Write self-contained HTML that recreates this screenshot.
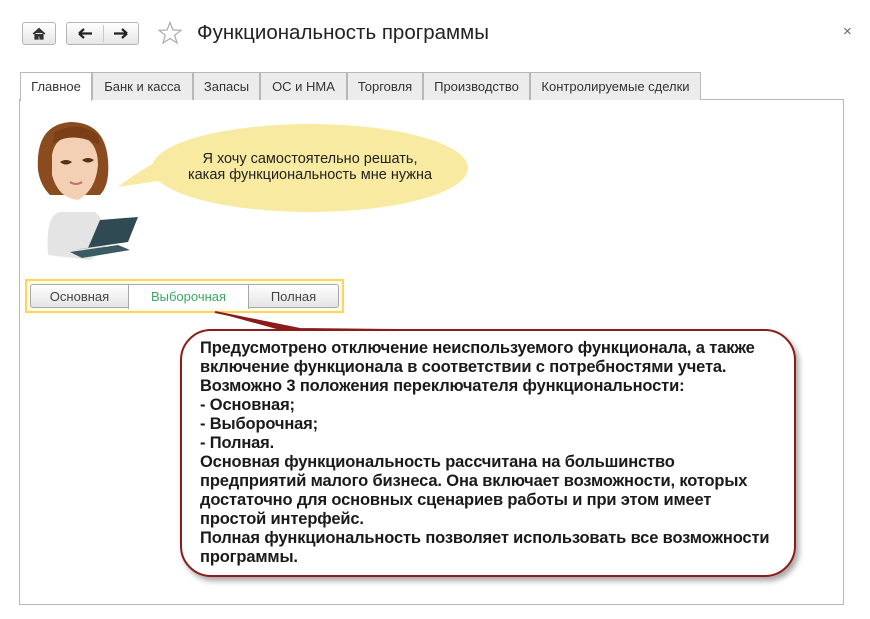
<!DOCTYPE html>
<html><head><meta charset="utf-8"><style>
body{margin:0;width:870px;height:619px;background:#fff;font-family:"Liberation Sans",Arial,sans-serif;position:relative;overflow:hidden}
.abs{position:absolute}
.btn{position:absolute;border:1px solid #b5b5b5;border-radius:3px;background:linear-gradient(#fff,#e6e6e6);box-sizing:border-box}
.tab{position:absolute;top:72px;height:28px;box-sizing:border-box;border:1px solid #b8b8b8;border-bottom:none;background:#ececec;font-size:13px;color:#333;text-align:center;line-height:27px}
.seg{position:absolute;top:0;height:24px;line-height:23px;font-size:13px;text-align:center;color:#444;box-sizing:border-box}
.txt{position:absolute;left:200px;top:339px;font-size:16.5px;font-weight:bold;line-height:19px;color:#1a1a1a;letter-spacing:-0.15px}
</style></head><body>
<div class="btn" style="left:22px;top:22px;width:34px;height:23px"><svg width="32" height="21"><path d="M10 11 L16 5.5 L22 11 M12 10 V16 H15 V13 H17 V16 H20 V10" fill="#333" stroke="#333" stroke-width="1.2"/></svg></div>
<div class="btn" style="left:66px;top:22px;width:73px;height:23px"><div class="abs" style="left:36px;top:2px;width:1px;height:17px;background:#c8c8c8"></div>
<svg class="abs" style="left:0;top:0" width="72" height="21"><path d="M12 10.5 H25 M12 10.5 L17 6 M12 10.5 L17 15" stroke="#222" stroke-width="2.2" fill="none"/><path d="M47 10.5 H60 M60 10.5 L55 6 M60 10.5 L55 15" stroke="#222" stroke-width="2.2" fill="none"/></svg></div>
<svg class="abs" style="left:158px;top:21px" width="24" height="24"><path d="M12 1.5 L15 9 L23 9.3 L16.7 14.2 L19 22 L12 17.5 L5 22 L7.3 14.2 L1 9.3 L9 9 Z" fill="none" stroke="#aaa" stroke-width="1.2"/></svg>
<div class="abs" style="left:197px;top:21px;font-size:20.5px;color:#222">Функциональность программы</div>
<div class="abs" style="left:843px;top:23px;font-size:15px;color:#666">×</div>

<div class="abs" style="left:19px;top:99px;width:823px;height:504px;border:1px solid #b8b8b8"></div>
<div class="tab" style="left:20px;width:72px;background:#fff;height:29px">Главное</div>
<div class="tab" style="left:92px;width:101px">Банк и касса</div>
<div class="tab" style="left:193px;width:67px">Запасы</div>
<div class="tab" style="left:260px;width:87px">ОС и НМА</div>
<div class="tab" style="left:347px;width:76px">Торговля</div>
<div class="tab" style="left:423px;width:107px">Производство</div>
<div class="tab" style="left:530px;width:171px">Контролируемые сделки</div>

<svg class="abs" style="left:0;top:100px" width="480" height="240">
<path d="M118 87 Q140 70 160 60 L200 75 Q150 82 118 87Z" fill="#f8eaa0"/>
<ellipse cx="310" cy="68" rx="158" ry="44" fill="#f8eaa0"/>
<path d="M48 155 Q45 115 60 112 L95 112 Q110 125 105 150 L90 160 Z" fill="#e4e4e4"/>
<path d="M38 70 Q35 25 70 22 Q105 22 108 60 Q110 85 100 95 L50 95 Q40 85 38 70Z" fill="#8a4b1f"/>
<path d="M52 55 Q55 35 78 35 Q98 40 98 65 Q96 90 78 100 Q58 98 52 75Z" fill="#f3d0b4"/>
<path d="M52 45 Q70 30 100 45 L98 35 Q80 20 55 32Z" fill="#7a3f17"/>
<path d="M60 62 Q66 58 72 62 Q66 67 60 62Z M82 60 Q88 56 94 60 Q88 65 82 60Z" fill="#5a2e10"/>
<path d="M70 82 Q76 86 82 82" stroke="#c07070" stroke-width="2" fill="none"/>
<path d="M73 150 L128 142 L138 117 L100 120 L88 148 Z" fill="#2f4a52"/>
<path d="M70 152 L118 145 L130 150 L82 158Z" fill="#3b5a62"/>
</svg>
<div class="abs" style="left:160px;top:151px;width:300px;text-align:center;font-size:14.5px;line-height:16px;color:#222">Я хочу самостоятельно решать,<br>какая функциональность мне нужна</div>

<div class="abs" style="left:25px;top:279px;width:319px;height:34px;border:2px solid #fbd65a;box-sizing:border-box;background:#fffbe8"></div>
<div class="abs" style="left:30px;top:284px;width:309px;height:24px;border:1px solid #a8a8a8;border-radius:3px;box-sizing:border-box;background:linear-gradient(#fff,#e4e4e4)">
<div class="seg" style="left:0;width:98px;border-right:1px solid #a8a8a8">Основная</div>
<div class="seg" style="left:98px;width:120px;border-right:1px solid #a8a8a8;background:#fff;color:#3aa860">Выборочная</div>
<div class="seg" style="left:218px;width:89px">Полная</div>
</div>

<svg class="abs" style="left:0;top:0" width="870" height="619">
<defs><filter id="s"><feDropShadow dx="3" dy="4" stdDeviation="3" flood-color="#000" flood-opacity="0.35"/></filter></defs>
<path d="M213 312 L290 332 L380 331 Z" fill="#999" opacity="0.5"/>
<rect x="181" y="330" width="614" height="246" rx="30" fill="#fff" stroke="#8b1a1a" stroke-width="2" filter="url(#s)"/>
<path d="M215 312 L300 329 L395 330" fill="#fff" stroke="#8b1a1a" stroke-width="2"/>
<path d="M215 312 L280 330 L300 330Z" fill="#8b1a1a"/>
</svg>
<div class="txt">Предусмотрено отключение неиспользуемого функционала, а также<br>включение функционала в соответствии с потребностями учета.<br>Возможно 3 положения переключателя функциональности:<br>- Основная;<br>- Выборочная;<br>- Полная.<br>Основная функциональность рассчитана на большинство<br>предприятий малого бизнеса. Она включает возможности, которых<br>достаточно для основных сценариев работы и при этом имеет<br>простой интерфейс.<br>Полная функциональность позволяет использовать все возможности<br>программы.</div>
</body></html>
